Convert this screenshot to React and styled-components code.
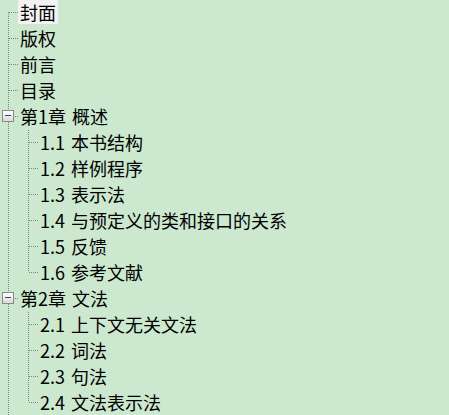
import React from 'react';
import styled, { createGlobalStyle, css } from 'styled-components';

const GlobalStyle = createGlobalStyle`
  html, body {
    margin: 0;
    padding: 0;
    background: #cce8cf;
    overflow: hidden;
  }
`;

const vdots = css`
  background-image: linear-gradient(to bottom, #808080 50%, transparent 50%);
  background-size: 1px 2px;
`;

const hdots = css`
  background-image: linear-gradient(to right, #808080 50%, transparent 50%);
  background-size: 2px 1px;
`;

const Tree = styled.ul`
  list-style: none;
  margin: 0;
  padding: 0;
  height: 415px;
  overflow: hidden;
  font-family: "Microsoft YaHei", "Noto Sans CJK SC", sans-serif;
  font-size: 18px;
  word-spacing: 2px;
  color: #000;
`;

const Row = styled.li`
  display: flex;
  height: 26px;
`;

const Guide = styled.span`
  position: relative;
  flex: 0 0 20px;
  ${p => p.$line && css`
    &::before {
      content: '';
      position: absolute;
      left: 8px;
      top: 0;
      bottom: 0;
      width: 1px;
      ${vdots}
    }
  `}
`;

const Connector = styled.span`
  position: relative;
  flex: 0 0 18px;

  &::before {
    content: '';
    position: absolute;
    left: 8px;
    width: 1px;
    top: ${p => (p.$first ? '12px' : '0')};
    bottom: ${p => (p.$last ? '14px' : '0')};
    ${vdots}
  }

  &::after {
    content: '';
    position: absolute;
    left: 9px;
    top: 12px;
    width: 9px;
    height: 1px;
    ${hdots}
  }
`;

const Expander = styled.span`
  position: absolute;
  left: 2px;
  top: 6px;
  width: 12px;
  height: 12px;
  box-sizing: border-box;
  border: 1px solid #8a8a8a;
  background: linear-gradient(to bottom, #ffffff, #dadada);
  z-index: 1;

  &::after {
    content: '';
    position: absolute;
    left: 2px;
    top: 4px;
    width: 6px;
    height: 1px;
    background: #2a4a80;
  }
`;

const Label = styled.span`
  height: 24px;
  line-height: 24px;
  padding: 0 2px;
  white-space: nowrap;
  background: ${p => (p.$selected ? '#f2f2f2' : 'transparent')};
`;

const data = [
  { label: '封面', selected: true },
  { label: '版权' },
  { label: '前言' },
  { label: '目录' },
  {
    label: '第1章 概述',
    children: [
      { label: '1.1 本书结构' },
      { label: '1.2 样例程序' },
      { label: '1.3 表示法' },
      { label: '1.4 与预定义的类和接口的关系' },
      { label: '1.5 反馈' },
      { label: '1.6 参考文献' },
    ],
  },
  {
    label: '第2章 文法',
    children: [
      { label: '2.1 上下文无关文法' },
      { label: '2.2 词法' },
      { label: '2.3 句法' },
      { label: '2.4 文法表示法' },
    ],
  },
  // the list goes on below the visible area
  { label: '第3章 词法结构' },
];

const flatten = (nodes, guides = [], rootLevel = true) => {
  let rows = [];
  nodes.forEach((node, i) => {
    const last = i === nodes.length - 1;
    rows.push({
      ...node,
      guides,
      first: rootLevel && i === 0,
      last,
    });
    if (node.children) {
      rows = rows.concat(flatten(node.children, [...guides, !last], false));
    }
  });
  return rows;
};

const App = () => {
  const rows = flatten(data);
  return (
    <>
      <GlobalStyle />
      <Tree>
        {rows.map((row, i) => (
          <Row key={i}>
            {row.guides.map((line, j) => (
              <Guide key={j} $line={line} />
            ))}
            <Connector $first={row.first} $last={row.last}>
              {row.children && <Expander />}
            </Connector>
            <Label $selected={row.selected}>{row.label}</Label>
          </Row>
        ))}
      </Tree>
    </>
  );
};

export default App;
